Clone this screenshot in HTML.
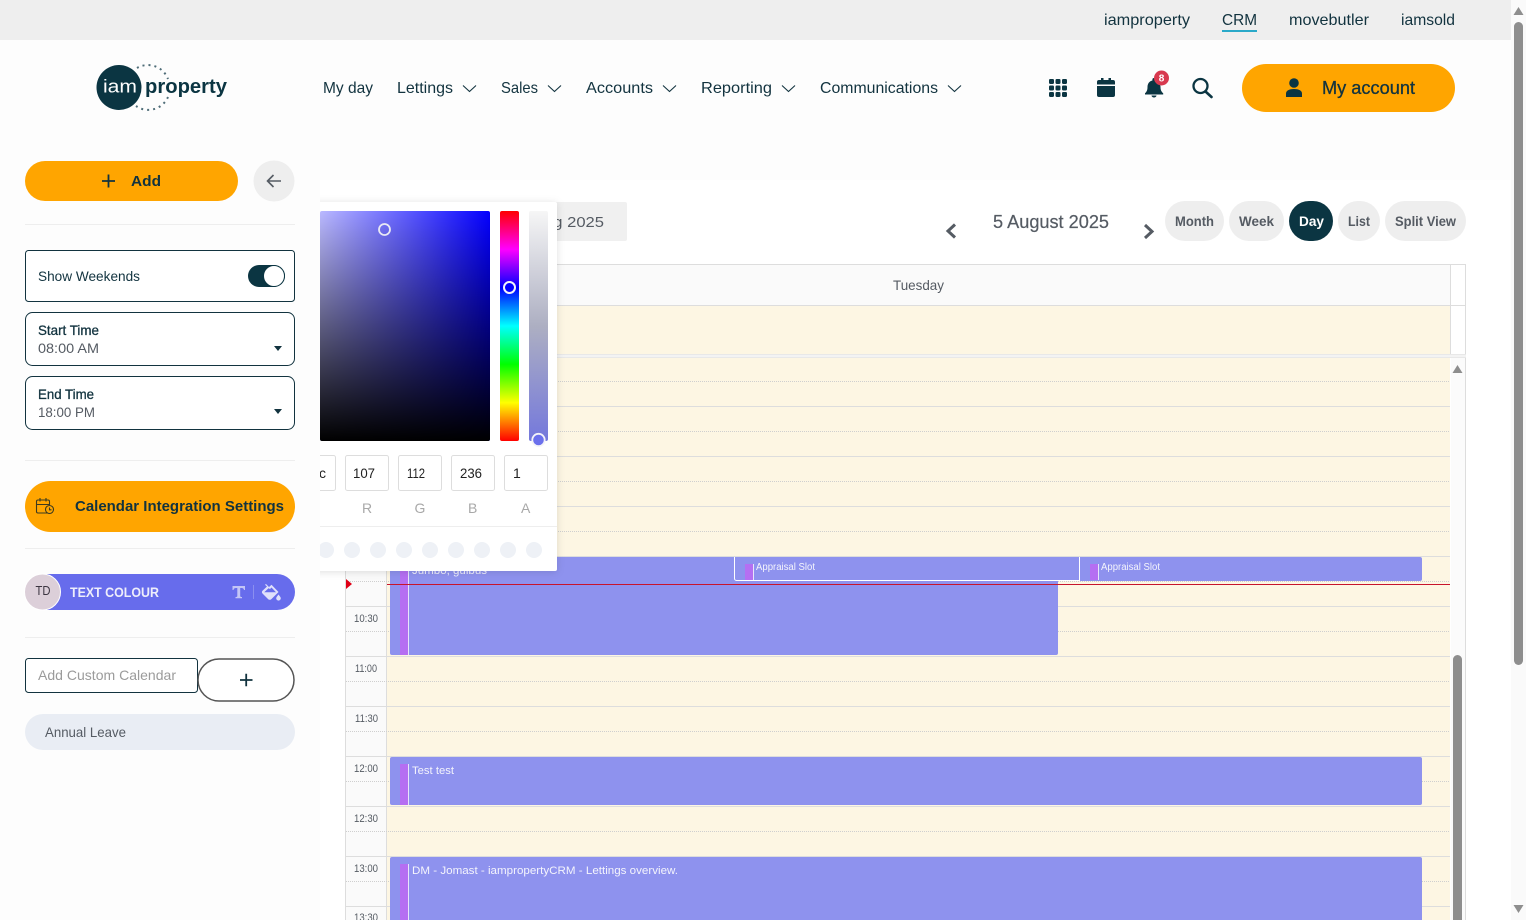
<!DOCTYPE html>
<html lang="en">
<head>
<meta charset="utf-8">
<title>Calendar</title>
<style>
html,body{margin:0;padding:0;width:1526px;height:920px;overflow:hidden;background:#fdfdfd}
svg{display:block;position:absolute;left:0;top:0}
text{font-family:"Liberation Sans",sans-serif;white-space:pre}
.d{fill:#12333f}
.g{fill:#555b63}
.m{stroke-width:.3px;stroke:currentColor}
.w{fill:#f4f4fc}
</style>
</head>
<body>
<svg xmlns="http://www.w3.org/2000/svg" width="1526" height="920" viewBox="0 0 1526 920">
<defs>
<linearGradient id="sx" x1="0" x2="1" y1="0" y2="0"><stop offset="0" stop-color="#fff"/><stop offset="1" stop-color="#0400ff"/></linearGradient>
<linearGradient id="sy" x1="0" x2="0" y1="0" y2="1"><stop offset="0" stop-color="#000" stop-opacity="0"/><stop offset="1" stop-color="#000"/></linearGradient>
<linearGradient id="hue" x1="0" x2="0" y1="0" y2="1"><stop offset="0" stop-color="#f00"/><stop offset=".1667" stop-color="#f0f"/><stop offset=".3333" stop-color="#00f"/><stop offset=".5" stop-color="#0ff"/><stop offset=".6667" stop-color="#0f0"/><stop offset=".8333" stop-color="#ff0"/><stop offset="1" stop-color="#f00"/></linearGradient>
<linearGradient id="alpha" x1="0" x2="0" y1="0" y2="1"><stop offset="0" stop-color="#f6f6f6"/><stop offset=".5" stop-color="#adafc2"/><stop offset="1" stop-color="#7478dc"/></linearGradient>
<filter id="sh" x="-10%" y="-10%" width="120%" height="120%"><feDropShadow dx="0" dy="1" stdDeviation="4" flood-color="#000" flood-opacity=".13"/></filter>
<clipPath id="pc"><rect x="320" y="190" width="260" height="400"/></clipPath>
<clipPath id="sc"><rect x="320" y="211" width="170" height="230" rx="2"/></clipPath>
</defs>

<!-- page -->
<rect width="1526" height="920" fill="#fdfdfd"/>
<rect x="320" y="180" width="1191" height="740" fill="#fff"/>
<rect x="0" y="0" width="1511" height="40" fill="#eee"/>

<!-- scrollbar -->
<rect x="1511" y="0" width="15" height="920" fill="#fafafa"/>
<path d="M1518.500 7 L1523.500 15 H1513.500 Z" fill="#8e8e8e"/>
<rect x="1514" y="22" width="9" height="643" rx="4.500" fill="#8e8e8e"/>
<path d="M1518.500 913 L1523.500 905 H1513.500 Z" fill="#8e8e8e"/>

<!-- top links -->
<g font-size="16" class="d">
<text x="1104" y="25" textLength="86" lengthAdjust="spacingAndGlyphs">iamproperty</text>
<text x="1222" y="25" textLength="35" lengthAdjust="spacingAndGlyphs">CRM</text>
<text x="1289" y="25" textLength="80" lengthAdjust="spacingAndGlyphs">movebutler</text>
<text x="1401" y="25" textLength="54" lengthAdjust="spacingAndGlyphs">iamsold</text>
</g>
<rect x="1222" y="30" width="35" height="2" fill="#2aa9c9"/>

<!-- logo -->
<circle cx="119" cy="87.500" r="22.500" fill="#0b3542"/>
<text x="103" y="92.500" font-size="18" fill="#fff" textLength="34" lengthAdjust="spacingAndGlyphs">iam</text>
<path d="M137 68 A21.500 21.500 0 0 1 168 79" fill="none" stroke="#4f6d78" stroke-width="2" stroke-dasharray="2 4"/>
<path d="M168 97 A21.500 21.500 0 0 1 136 106" fill="none" stroke="#4f6d78" stroke-width="2" stroke-dasharray="2 4"/>
<text x="145" y="93" font-size="20" font-weight="700" fill="#0b3542" textLength="82" lengthAdjust="spacingAndGlyphs">property</text>

<!-- nav -->
<g font-size="16" class="d">
<text x="323" y="93" textLength="50" lengthAdjust="spacingAndGlyphs">My day</text>
<text x="397" y="93" textLength="56" lengthAdjust="spacingAndGlyphs">Lettings</text>
<text x="501" y="93" textLength="37" lengthAdjust="spacingAndGlyphs">Sales</text>
<text x="586" y="93" textLength="67" lengthAdjust="spacingAndGlyphs">Accounts</text>
<text x="701" y="93" textLength="71" lengthAdjust="spacingAndGlyphs">Reporting</text>
<text x="820" y="93" textLength="118" lengthAdjust="spacingAndGlyphs">Communications</text>
</g>
<g fill="none" stroke="#12333f" stroke-width="1.100">
<path d="M463 85.500 L469.500 91.500 L476 85.500"/>
<path d="M548 85.500 L554.500 91.500 L561 85.500"/>
<path d="M663 85.500 L669.500 91.500 L676 85.500"/>
<path d="M782 85.500 L788.500 91.500 L795 85.500"/>
<path d="M948 85.500 L954.500 91.500 L961 85.500"/>
</g>

<!-- header icons -->
<g fill="#0b3542">
<rect x="1049" y="79" width="5" height="5" rx="1.200"/><rect x="1055.500" y="79" width="5" height="5" rx="1.200"/><rect x="1062" y="79" width="5" height="5" rx="1.200"/>
<rect x="1049" y="85.500" width="5" height="5" rx="1.200"/><rect x="1055.500" y="85.500" width="5" height="5" rx="1.200"/><rect x="1062" y="85.500" width="5" height="5" rx="1.200"/>
<rect x="1049" y="92" width="5" height="5" rx="1.200"/><rect x="1055.500" y="92" width="5" height="5" rx="1.200"/><rect x="1062" y="92" width="5" height="5" rx="1.200"/>
<path d="M1097 86 H1115 V95 a2 2 0 0 1 -2 2 H1099 a2 2 0 0 1 -2 -2 Z"/>
<path d="M1099 80 H1101 V78 H1103.500 V80 H1108.500 V78 H1111 V80 H1113 a2 2 0 0 1 2 2 V84.500 H1097 V82 a2 2 0 0 1 2 -2 Z"/>
<path d="M1154 78 a1.600 1.600 0 0 1 1.600 1.600 V80.500 C1159 81.300 1160.500 84 1160.500 87 C1160.500 91 1162 92 1163.200 93.300 V94.500 H1145 V93.300 C1146.200 92 1147.500 91 1147.500 87 C1147.500 84 1149 81.300 1152.400 80.500 V79.600 A1.600 1.600 0 0 1 1154 78 Z"/>
<path d="M1151.500 95.500 H1156.500 A2.500 2 0 0 1 1151.500 95.500 Z"/>
</g>
<circle cx="1161.500" cy="78" r="7.500" fill="#d8394f"/>
<text x="1158.800" y="81.500" font-size="10" font-weight="700" fill="#fff">8</text>
<circle cx="1200.500" cy="86" r="7" fill="none" stroke="#0b3542" stroke-width="2.300"/>
<path d="M1205.500 91.500 L1211.500 97" stroke="#0b3542" stroke-width="2.600" stroke-linecap="round"/>

<!-- my account -->
<rect x="1242" y="64" width="213" height="48" rx="24" fill="#ffa500"/>
<circle cx="1294" cy="83" r="4.800" fill="#0b3542"/>
<path d="M1286 97 V93.500 C1286 90.500 1289.500 89 1294 89 C1298.500 89 1302 90.500 1302 93.500 V97 Z" fill="#0b3542"/>
<text x="1322" y="94" font-size="18" class="d m" color="#12333f" textLength="93" lengthAdjust="spacingAndGlyphs">My account</text>

<!-- sidebar add -->
<rect x="25" y="161" width="213" height="40" rx="20" fill="#ffa500"/>
<path d="M102 181 H115 M108.500 174.500 V187.500" stroke="#12333f" stroke-width="1.800"/>
<text x="131" y="186" font-size="15" font-weight="700" class="d" textLength="30" lengthAdjust="spacingAndGlyphs">Add</text>
<circle cx="274" cy="181" r="20.500" fill="#eee"/>
<path d="M281 181 H267.500 M273.500 175 L267.500 181 L273.500 187" fill="none" stroke="#555b63" stroke-width="1.600"/>
<rect x="25" y="224" width="270" height="1" fill="#eee"/>

<rect x="25.500" y="250.500" width="269" height="51" rx="3" fill="#fff" stroke="#12333f"/>
<text x="38" y="281" font-size="14" class="d" textLength="102" lengthAdjust="spacingAndGlyphs">Show Weekends</text>
<rect x="248" y="265" width="37" height="22" rx="11" fill="#0b3542"/>
<circle cx="274" cy="276" r="10.500" fill="#fff" stroke="#0b3542"/>

<rect x="25.500" y="312.500" width="269" height="53" rx="7" fill="#fff" stroke="#12333f"/>
<text x="38" y="335" font-size="14" class="d m" color="#12333f" textLength="61" lengthAdjust="spacingAndGlyphs">Start Time</text>
<text x="38" y="353" font-size="14" class="g" textLength="61" lengthAdjust="spacingAndGlyphs">08:00 AM</text>
<path d="M274 346 H282 L278 351 Z" fill="#12333f"/>

<rect x="25.500" y="376.500" width="269" height="53" rx="7" fill="#fff" stroke="#12333f"/>
<text x="38" y="399" font-size="14" class="d m" color="#12333f" textLength="56" lengthAdjust="spacingAndGlyphs">End Time</text>
<text x="38" y="417" font-size="14" class="g" textLength="57" lengthAdjust="spacingAndGlyphs">18:00 PM</text>
<path d="M274 409 H282 L278 414 Z" fill="#12333f"/>

<rect x="25" y="460" width="270" height="1" fill="#eee"/>
<rect x="25" y="481" width="270" height="51" rx="25.500" fill="#ffa500"/>
<g fill="none" stroke="#3a3a20" stroke-width="1.100">
<path d="M47 513 H38 a1.500 1.500 0 0 1 -1.500 -1.500 V501.500 a1.500 1.500 0 0 1 1.500 -1.500 H48 a1.500 1.500 0 0 1 1.500 1.500 V505"/>
<path d="M36.500 504.500 H49.500 M40 498 V501.500 M46 498 V501.500"/>
<circle cx="49.500" cy="509.500" r="4"/>
<path d="M49.500 507.500 V509.800 H51.500"/>
</g>
<text x="75" y="511" font-size="15" font-weight="700" class="d" textLength="209" lengthAdjust="spacingAndGlyphs">Calendar Integration Settings</text>
<rect x="25" y="548" width="270" height="1" fill="#eee"/>

<!-- text colour pill -->
<rect x="25" y="574" width="270" height="36" rx="18" fill="#676cec"/>
<circle cx="42.500" cy="592" r="18" fill="#dccfd9" stroke="#fff" stroke-width="1"/>
<text x="35.500" y="595" font-size="13" fill="#3b3440" textLength="15" lengthAdjust="spacingAndGlyphs">TD</text>
<text x="70" y="597" font-size="14" font-weight="700" fill="#eeeefb" textLength="89" lengthAdjust="spacingAndGlyphs">TEXT COLOUR</text>
<path d="M232.500 586 H245 V590 H244 C243.700 588.500 243 588 241.500 588 H240.200 V596 C240.200 596.800 240.700 597 242 597 V598.200 H235.500 V597 C236.800 597 237.300 596.800 237.300 596 V588 H236 C234.500 588 233.800 588.500 233.500 590 H232.500 Z" fill="#c3c5f6"/>
<rect x="253" y="585" width="1" height="14" fill="#8b8fef"/>
<path d="M266 584 L269 587 L271.500 584.800 L278.500 592 L271.500 599 C270.500 600 269 600 268 599 L262.500 593.500 C261.700 592.700 261.700 591.500 262.500 590.700 L267 586.500 L265 584.800 Z M268.500 588.200 L264.200 592.300 H276 L271.500 587.500 L270 589 Z" fill="#dfe0fb" fill-rule="evenodd"/>
<path d="M278.500 594.500 C279.500 596 280.800 597 280.800 598.300 A2.300 2.300 0 0 1 276.200 598.300 C276.200 597 277.500 596 278.500 594.500 Z" fill="#dfe0fb"/>
<rect x="25" y="637" width="270" height="1" fill="#eee"/>

<!-- custom calendar -->
<rect x="25.500" y="658.500" width="172" height="34" rx="3" fill="#fff" stroke="#12333f"/>
<text x="38" y="680" font-size="14" fill="#9b9b9b" textLength="138" lengthAdjust="spacingAndGlyphs">Add Custom Calendar</text>
<rect x="198" y="659" width="96" height="42" rx="21" fill="#fff" stroke="#555" stroke-width="1.500"/>
<path d="M240 680 H252.500 M246.200 673.800 V686.200" stroke="#12333f" stroke-width="1.800"/>
<rect x="25" y="714" width="270" height="36" rx="18" fill="#e9edf4"/>
<text x="45" y="737" font-size="14" class="g" textLength="81" lengthAdjust="spacingAndGlyphs">Annual Leave</text>

<!-- calendar toolbar -->
<rect x="520" y="202" width="107" height="39" rx="2" fill="#f0f0f0"/>
<text x="533" y="227" font-size="14.500" class="g" textLength="71" lengthAdjust="spacingAndGlyphs">Aug 2025</text>
<path d="M955 224.500 L948 231 L955 237.500" fill="none" stroke="#555b63" stroke-width="3"/>
<text x="993" y="228" font-size="18" class="g m" color="#555b63" style="stroke-width:.2px" textLength="116" lengthAdjust="spacingAndGlyphs">5 August 2025</text>
<path d="M1145 225 L1152 231.500 L1145 238" fill="none" stroke="#555b63" stroke-width="3"/>

<rect x="1165" y="201" width="59" height="40" rx="20" fill="#eee"/>
<rect x="1229" y="201" width="55" height="40" rx="20" fill="#eee"/>
<rect x="1289" y="201" width="44" height="40" rx="20" fill="#0b3542"/>
<rect x="1338" y="201" width="42" height="40" rx="20" fill="#eee"/>
<rect x="1385" y="201" width="81" height="40" rx="20" fill="#eee"/>
<g font-size="14" font-weight="700" fill="#555b63">
<text x="1175" y="226" textLength="39" lengthAdjust="spacingAndGlyphs">Month</text>
<text x="1239" y="226" textLength="35" lengthAdjust="spacingAndGlyphs">Week</text>
<text x="1299" y="226" fill="#fff" textLength="25" lengthAdjust="spacingAndGlyphs">Day</text>
<text x="1348" y="226" textLength="22" lengthAdjust="spacingAndGlyphs">List</text>
<text x="1395" y="226" textLength="61" lengthAdjust="spacingAndGlyphs">Split View</text>
</g>

<!-- grid header -->
<rect x="345" y="264" width="1121" height="41" fill="#fafafa"/>
<rect x="1451" y="265" width="14" height="90" fill="#fff"/>
<rect x="345" y="264" width="1121" height="1" fill="#ddd"/>
<rect x="345" y="305" width="1120" height="1" fill="#ddd"/>
<rect x="1450" y="265" width="1" height="90" fill="#ddd"/>
<rect x="1465" y="264" width="1" height="656" fill="#ddd"/>
<text x="893" y="290" font-size="14" class="g" textLength="51" lengthAdjust="spacingAndGlyphs">Tuesday</text>
<rect x="345" y="306" width="1105" height="48" fill="#fdf6e3"/>
<rect x="345" y="354" width="1121" height="4" fill="#e8e8e8"/>
<rect x="345" y="355" width="1121" height="2" fill="#f3f3f3"/>

<!-- grid body -->
<rect x="345" y="358" width="1" height="562" fill="#ddd"/>
<rect x="346" y="358" width="40" height="562" fill="#fafafa"/>
<rect x="386" y="358" width="1" height="562" fill="#ddd"/>
<rect x="387" y="358" width="1063" height="562" fill="#fdf6e3"/>
<rect x="1451" y="358" width="14" height="562" fill="#fbfbfb"/>
<g fill="#ddd">
<rect x="346" y="406" width="1104" height="1"/><rect x="346" y="456" width="1104" height="1"/><rect x="346" y="506" width="1104" height="1"/><rect x="346" y="556" width="1104" height="1"/><rect x="346" y="606" width="1104" height="1"/><rect x="346" y="656" width="1104" height="1"/><rect x="346" y="706" width="1104" height="1"/><rect x="346" y="756" width="1104" height="1"/><rect x="346" y="806" width="1104" height="1"/><rect x="346" y="856" width="1104" height="1"/><rect x="346" y="906" width="1104" height="1"/>
</g>
<g stroke="#cfcfcf" stroke-width="1" stroke-dasharray="1 1">
<path d="M346 381.500 H1450 M346 431.500 H1450 M346 481.500 H1450 M346 531.500 H1450 M346 581.500 H1450 M346 631.500 H1450 M346 681.500 H1450 M346 731.500 H1450 M346 781.500 H1450 M346 831.500 H1450 M346 881.500 H1450"/>
</g>
<g font-size="11" class="g">
<text x="354" y="622" textLength="24" lengthAdjust="spacingAndGlyphs">10:30</text>
<text x="355" y="672" textLength="22" lengthAdjust="spacingAndGlyphs">11:00</text>
<text x="355" y="722" textLength="23" lengthAdjust="spacingAndGlyphs">11:30</text>
<text x="354" y="772" textLength="24" lengthAdjust="spacingAndGlyphs">12:00</text>
<text x="354" y="822" textLength="24" lengthAdjust="spacingAndGlyphs">12:30</text>
<text x="354" y="872" textLength="24" lengthAdjust="spacingAndGlyphs">13:00</text>
<text x="354" y="921" textLength="24" lengthAdjust="spacingAndGlyphs">13:30</text>
</g>

<!-- events -->
<rect x="390" y="557" width="668" height="98" rx="2" fill="#8e92ee"/>
<rect x="400" y="557" width="8" height="98" fill="#b56ff2"/>
<rect x="408" y="557" width="1" height="98" fill="#e8e4fb"/>
<text x="412" y="574" font-size="11" fill="#f0f0fc" textLength="75" lengthAdjust="spacingAndGlyphs">Jumbo, gulbus</text>

<rect x="734" y="557" width="688" height="24" rx="2" fill="#8e92ee"/>
<path d="M734.500 557 V578.500 a2 2 0 0 0 2 2 H1079.500 V557 M1079.500 557 V580.500" fill="none" stroke="#fff"/>
<rect x="745" y="564" width="8" height="16" fill="#b56ff2"/>
<rect x="753" y="564" width="1" height="16" fill="#e8e4fb"/>
<text x="756" y="570" font-size="10" fill="#f4f4fc" textLength="59" lengthAdjust="spacingAndGlyphs">Appraisal Slot</text>
<rect x="1090" y="564" width="8" height="16" fill="#b56ff2"/>
<rect x="1098" y="564" width="1" height="16" fill="#e8e4fb"/>
<text x="1101" y="570" font-size="10" fill="#f4f4fc" textLength="59" lengthAdjust="spacingAndGlyphs">Appraisal Slot</text>

<rect x="390" y="757" width="1032" height="48" rx="2" fill="#8e92ee"/>
<rect x="400" y="764" width="8" height="41" fill="#b56ff2"/>
<rect x="408" y="764" width="1" height="41" fill="#e8e4fb"/>
<text x="412" y="774" font-size="11" fill="#f4f4fc" textLength="42" lengthAdjust="spacingAndGlyphs">Test test</text>

<rect x="390" y="857" width="1032" height="70" rx="2" fill="#8e92ee"/>
<rect x="400" y="864" width="8" height="60" fill="#b56ff2"/>
<rect x="408" y="864" width="1" height="60" fill="#e8e4fb"/>
<text x="412" y="874" font-size="11" fill="#f4f4fc" textLength="266" lengthAdjust="spacingAndGlyphs">DM - Jomast - iampropertyCRM - Lettings overview.</text>

<!-- now line -->
<rect x="387" y="584" width="1063" height="1" fill="#c8142c"/>
<path d="M346 579 L352 584 L346 589 Z" fill="#e00016"/>

<!-- inner scrollbar -->
<path d="M1457.500 365 L1462.500 373 H1452.500 Z" fill="#8e8e8e"/>
<rect x="1453" y="655" width="9" height="270" rx="4.500" fill="#8e8e8e"/>

<!-- colour picker -->
<g clip-path="url(#pc)">
<rect x="300" y="202" width="257" height="369" rx="2" fill="#fff" filter="url(#sh)"/>
<g clip-path="url(#sc)">
<rect x="256" y="211" width="234" height="230" fill="url(#sx)"/>
<rect x="256" y="211" width="234" height="230" fill="url(#sy)"/>
</g>
<circle cx="384.500" cy="229.500" r="5.500" fill="none" stroke="#e8e8f4" stroke-width="1.800"/>
<rect x="500" y="211" width="19" height="230" rx="2" fill="url(#hue)"/>
<circle cx="509.500" cy="287.500" r="5.500" fill="#0400ff" stroke="#f4f4fa" stroke-width="2"/>
<rect x="529" y="211" width="19" height="230" rx="2" fill="url(#alpha)"/>
<circle cx="538.500" cy="440" r="6.200" fill="#6b70ec" stroke="#f4f4f8" stroke-width="1.800"/>

<g fill="#fff" stroke="#ddd">
<rect x="300.500" y="455.500" width="35" height="35" rx="2"/>
<rect x="345.500" y="455.500" width="43" height="35" rx="2"/>
<rect x="398.500" y="455.500" width="43" height="35" rx="2"/>
<rect x="451.500" y="455.500" width="43" height="35" rx="2"/>
<rect x="504.500" y="455.500" width="43" height="35" rx="2"/>
</g>
<g font-size="14" fill="#222">
<text x="319" y="478">c</text>
<text x="353" y="478" textLength="22" lengthAdjust="spacingAndGlyphs">107</text>
<text x="407" y="478" textLength="18" lengthAdjust="spacingAndGlyphs">112</text>
<text x="460" y="478" textLength="22" lengthAdjust="spacingAndGlyphs">236</text>
<text x="513" y="478">1</text>
</g>
<g font-size="14" fill="#a8a8a8">
<text x="362" y="513">R</text>
<text x="414.500" y="513">G</text>
<text x="468" y="513">B</text>
<text x="521" y="513">A</text>
</g>
<rect x="300" y="526" width="257" height="1" fill="#eee"/>
<g fill="#eef1f6">
<circle cx="326" cy="550" r="8"/><circle cx="352" cy="550" r="8"/><circle cx="378" cy="550" r="8"/><circle cx="404" cy="550" r="8"/><circle cx="430" cy="550" r="8"/><circle cx="456" cy="550" r="8"/><circle cx="482" cy="550" r="8"/><circle cx="508" cy="550" r="8"/><circle cx="534" cy="550" r="8"/>
</g>
</g>
</svg>
</body>
</html>
